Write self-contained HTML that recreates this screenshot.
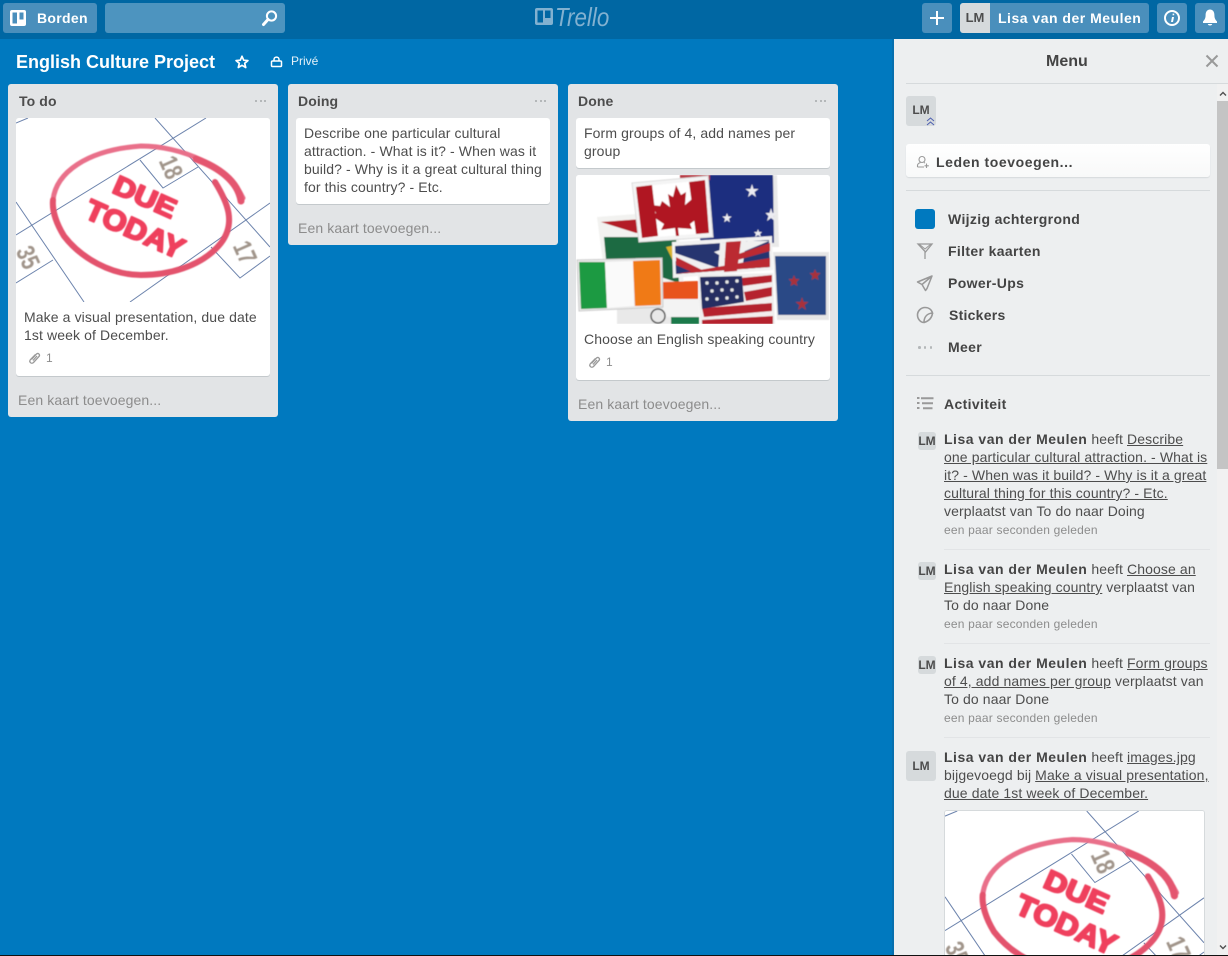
<!DOCTYPE html>
<html lang="nl"><head><meta charset="utf-8"><title>English Culture Project</title>
<style>
*{box-sizing:border-box}
html,body{margin:0;padding:0;width:1228px;height:956px;overflow:hidden;background:#0079bf;font-family:"Liberation Sans",sans-serif;font-size:14px;line-height:18px;color:#4d4d4d;letter-spacing:.11px}
.a{position:absolute;white-space:nowrap}
.hb{position:absolute;top:3px;height:30px;background:#4a8fbc;border-radius:3px;color:#fff}
.list{position:absolute;top:84px;width:270px;background:#e2e4e6;border-radius:3px}
.card{position:absolute;left:8px;width:254px;background:#fff;border-radius:3px;box-shadow:0 1px 0 #c4c9cc;overflow:hidden}
.lt{position:absolute;left:10px;top:8px;font-weight:bold;color:#4d4d4d;font-size:14px}
.dots{position:absolute;left:247px;top:16px;width:11px;height:2px;display:flex;justify-content:space-between}
.dots i{width:2px;height:2px;background:#b4b7b9;display:block}
.add{position:absolute;left:10px;color:#8c8c8c}
.ct{position:absolute;left:8px;white-space:nowrap}
.b{font-weight:bold;letter-spacing:.35px;color:#444}
.n{font-weight:bold;letter-spacing:.5px;color:#444}
.av{position:absolute;background:#d6dadc;border-radius:3px;color:#4d4d4d;font-weight:bold;text-align:center;letter-spacing:0}
.sep{position:absolute;left:906px;width:304px;height:1px;background:#d6dadc}
u{text-decoration:underline}
.tm{font-size:12px;color:#8c8c8c;letter-spacing:.2px}
</style></head>
<body>
<svg width="0" height="0" style="position:absolute">
<defs>
<filter id="soft" x="-5%" y="-5%" width="110%" height="110%"><feGaussianBlur stdDeviation=".45"/></filter>
<symbol id="due" viewBox="0 0 254 184" preserveAspectRatio="none">
<rect width="254" height="184" fill="#fff"/>
<g fill="none" stroke="#6d84ad" stroke-width="1">
<path d="M0 5L12 0M0 117L190 0M139 0L254 129M0 84L68 184M0 165L37 142M114 184L254 85M124 42L147 70L182 49M195 129L224 160L254 138"/>
</g>
<g filter="url(#soft)">
<path d="M37 82C40 55 70 32 125 28C165 28 212 48 227 80" fill="none" stroke="#e9708a" stroke-width="5" stroke-linecap="round"/>
<path d="M180 41C202 49 222 63 225 83" fill="none" stroke="#e4566f" stroke-width="7" stroke-linecap="round"/>
<path d="M199 64C212 85 220 105 205 125C185 150 150 157 125 157C95 157 65 140 48 118C40 105 36 92 37 82" fill="none" stroke="#e3526d" stroke-width="6" stroke-linecap="round"/>
<g font-family="'Liberation Sans',sans-serif" font-weight="bold" fill="#ef3f5d" stroke="#ef3f5d" stroke-width="2" stroke-linejoin="round">
<text x="0" y="0" font-size="27" textLength="66" lengthAdjust="spacingAndGlyphs" letter-spacing="0" transform="translate(95 74) rotate(24)">DUE</text>
<text x="0" y="0" font-size="29" textLength="105" lengthAdjust="spacingAndGlyphs" letter-spacing="0" transform="translate(67 99) rotate(24)">TODAY</text>
</g>
<g font-family="'Liberation Sans',sans-serif" font-weight="bold" font-size="26" fill="#a0948a">
<text textLength="22" lengthAdjust="spacingAndGlyphs" transform="translate(142.500 43) rotate(66)">18</text>
<text textLength="22" lengthAdjust="spacingAndGlyphs" transform="translate(216.500 128) rotate(66)">17</text>
<text textLength="22" lengthAdjust="spacingAndGlyphs" transform="translate(-.5 133) rotate(66)">35</text>
</g>
</g>
</symbol>
</defs>
</svg>

<!-- header -->
<div class="a" style="left:0;top:0;width:1228px;height:39px;background:#0067a3"></div>
<div class="hb" style="left:3px;width:94px"></div>
<svg class="a" style="left:10px;top:10px" width="16" height="16" viewBox="0 0 16 16"><rect width="16" height="16" rx="2" fill="#fff"/><rect x="2.500" y="2.500" width="4.500" height="11" fill="#4a8fbc"/><rect x="9.500" y="2.500" width="4" height="7" fill="#4a8fbc"/></svg>
<div class="a" style="left:37px;top:9px;color:#fff;font-weight:bold;font-size:14px;letter-spacing:.3px">Borden</div>
<div class="hb" style="left:105px;width:180px;background:#4d94bf"></div>
<svg class="a" style="left:261px;top:9px" width="18" height="18" viewBox="0 0 18 18" fill="none" stroke="#fff"><circle cx="10.500" cy="7" r="4.600" stroke-width="2"/><path d="M7 10.500L2.500 15.500" stroke-width="3" stroke-linecap="round"/></svg>
<svg class="a" style="left:535px;top:8px" width="18" height="17" viewBox="0 0 18 17"><rect width="18" height="17" rx="2" fill="#82b1d0"/><rect x="2.500" y="2.500" width="5.500" height="12" fill="#0067a3"/><rect x="10" y="2.500" width="5.500" height="7.500" fill="#0067a3"/></svg>
<div class="a" style="left:555px;top:2px;font-style:italic;font-size:26px;line-height:30px;color:#82b1d0;letter-spacing:0;transform:scaleX(.86);transform-origin:0 0">Trello</div>

<div class="hb" style="left:922px;width:30px"></div>
<svg class="a" style="left:929px;top:10px" width="16" height="16"><path d="M8 1V15M1 8H15" stroke="#fff" stroke-width="2"/></svg>
<div class="hb" style="left:960px;width:189px"></div>
<div class="av" style="left:960px;top:3px;width:30px;height:30px;line-height:30px;font-size:13px;border-radius:3px 0 0 3px">LM</div>
<div class="a" style="left:998px;top:9px;color:#fff;font-weight:bold;font-size:14px;letter-spacing:.5px">Lisa van der Meulen</div>
<div class="hb" style="left:1157px;width:30px"></div>
<svg class="a" style="left:1163px;top:9px" width="18" height="18" viewBox="0 0 18 18"><circle cx="9" cy="9" r="7" fill="none" stroke="#fff" stroke-width="2"/><path d="M9.600 4.600h1.600v1.700H9.600zM9 8h2l-1 5H8z" fill="#fff"/></svg>
<div class="hb" style="left:1195px;width:30px"></div>
<svg class="a" style="left:1202px;top:8px" width="16" height="19" viewBox="0 0 16 19"><path d="M8 1.500C5 1.500 3.600 4 3.600 7C3.600 10 2.800 11.500 1 13.500V15H15V13.500C13.200 11.500 12.400 10 12.400 7C12.400 4 11 1.500 8 1.500Z" fill="#fff"/><path d="M5.800 16H10.200C10 18 6 18 5.800 16Z" fill="#fff"/></svg>

<!-- board title -->
<div class="a" style="left:16px;top:51px;font-size:18px;line-height:22px;font-weight:bold;color:#fff;letter-spacing:0">English Culture Project</div>
<svg class="a" style="left:235px;top:55px" width="14" height="14" viewBox="0 0 14 14"><path d="M7 1.300L8.700 5.200L12.900 5.600L9.700 8.300L10.700 12.500L7 10.300L3.300 12.500L4.300 8.300L1.100 5.600L5.300 5.200Z" fill="none" stroke="#fff" stroke-width="1.700" stroke-linejoin="round"/></svg>
<svg class="a" style="left:270px;top:55px" width="13" height="13" viewBox="0 0 13 13" fill="none" stroke="#fff" stroke-width="1.500"><rect x="1.500" y="6" width="10" height="5.500" rx="1"/><path d="M4 6V4.500C4 1.300 9 1.300 9 4.500V6"/></svg>
<div class="a" style="left:291px;top:52px;color:#fff;font-size:12px;opacity:.9;letter-spacing:0">Privé</div>

<!-- To do -->
<div class="list" style="left:8px;height:333px">
<div class="lt" style="left:11px">To do</div>
<div class="dots"><i></i><i></i><i></i></div>
<div class="card" style="top:34px;height:258px">
<svg width="254" height="184" style="display:block"><use href="#due" width="254" height="184"/></svg>
<div class="ct" style="top:190px">Make a visual presentation, due date<br>1st week of December.</div>
<svg class="a" style="left:12px;top:233px" width="14" height="14" viewBox="0 0 14 14" fill="none" stroke="#999" stroke-width="1.300"><path d="M3.500 8.500L8.500 3C10 1.500 12.500 3.500 11 5.500L5.500 11.500C3.500 13.500 .5 11 2.500 8.500L7.500 3.500M5 9.500L9 5"/></svg>
<div class="a" style="left:30px;top:231px;font-size:12px;color:#8c8c8c">1</div>
</div>
<div class="add" style="top:307px">Een kaart toevoegen...</div>
</div>

<!-- Doing -->
<div class="list" style="left:288px;height:161px">
<div class="lt">Doing</div>
<div class="dots"><i></i><i></i><i></i></div>
<div class="card" style="top:34px;height:86px">
<div class="ct" style="top:6px">Describe one particular cultural<br>attraction. - What is it? - When was it<br>build? - Why is it a great cultural thing<br>for this country? - Etc.</div>
</div>
<div class="add" style="top:135px">Een kaart toevoegen...</div>
</div>

<!-- Done -->
<div class="list" style="left:568px;height:337px">
<div class="lt">Done</div>
<div class="dots"><i></i><i></i><i></i></div>
<div class="card" style="top:34px;height:50px">
<div class="ct" style="top:6px">Form groups of 4, add names per<br>group</div>
</div>
<div class="card" style="top:91px;height:205px">
<svg width="254" height="149" viewBox="0 0 254 149" style="display:block">
<rect width="254" height="149" fill="#fff"/>
<g filter="url(#soft)">
<!-- south africa -->
<polygon points="21,42 100,36 108,110 30,110" fill="#f2f2f0"/>
<polygon points="25,47 96,42 98,55 60,58" fill="#b31f25"/>
<polygon points="28,62 100,62 103,108 30,84" fill="#1d6b42"/>
<polygon points="90,72 100,70 100,92" fill="#d8b32a"/>
<!-- australia -->
<polygon points="104,0 201,0 203,72 130,72" fill="#e9e9e9"/>
<polygon points="110,0 197,0 198,68 125,68" fill="#1c2f7f"/>
<path d="M176 9l1.500 5 5 0-4 3 1.500 5-4-3-4 3 1.500-5-4-3 5 0zM151 38l1.200 3.500 3.500 0-2.800 2.200 1 3.500-2.900-2-2.900 2 1-3.500-2.800-2.200 3.500 0zM195 33l1.500 5 4 0-3 3 1.500 5-4-3-4 3 1.500-5-3-3 4 0zM182 54l1 3 3 0-2 2 1 3-3-2-3 2 1-3-2-2 3 0z" fill="#ececf2"/>
<rect x="104" y="0" width="30" height="5" fill="#b73a45"/>
<!-- canada -->
<polygon points="56,8 132,1 137,62 63,67" fill="#f4f4f4" stroke="#ddd"/>
<polygon points="60,12 129,5 133,58 66,63" fill="#fff"/>
<polygon points="60,12 76,10 82,61 66,63" fill="#b01722"/>
<polygon points="113,7 129,5 133,58 120,59" fill="#b01722"/>
<path d="M100 10l5 10 5-3-1 13 7-6 3 5 7-1-3 9 4 2-13 10 2 5-14-1 1 8-3 0-1-8-14 2 3-6-12-8 4-3-4-8 8 1 2-5 8 6-2-13 5 3z" fill="#b01722"/>
<!-- nz -->
<polygon points="197,77 253,77 253,145 201,145" fill="#e6e6e6"/>
<polygon points="199,81 250,81 250,140 202,140" fill="#2b4a86"/>
<path d="M239 94l1.500 4 4 0-3 3 1 4-3.500-2-3.500 2 1-4-3-3 4 0zM218 100l1.500 4 4 0-3 3 1 4-3.500-2-3.500 2 1-4-3-3 4 0zM226 122l1.500 5 5 0-4 3 1.500 5-4-3-4 3 1.500-5-4-3 5 0z" fill="#a8323a"/>
<!-- india -->
<rect x="41" y="130" width="82" height="19" fill="#e9e9e9"/>
<polygon points="87,107 122,106 122,130 87,130" fill="#e8531c"/>
<rect x="87" y="124" width="36" height="18" fill="#f3f3f3"/>
<rect x="95" y="142" width="28" height="7" fill="#1c7a4c"/>
<circle cx="82" cy="141" r="7" fill="#e8e8e8" stroke="#555" stroke-width="1.500"/>
<!-- uk -->
<polygon points="96,67 196,61 197,95 97,103" fill="#f2f2f2"/>
<polygon points="99,71 193,65 194,92 100,99" fill="#28356f"/>
<path d="M99 78L150 96H128L99 86ZM193 66L150 84L138 77L172 66ZM144 68L170 66L166 96L142 97Z" fill="#f0f0f0"/>
<path d="M150 67L165 66L161 96L148 97ZM100 82L130 97H116L100 90ZM194 68V76L158 86L148 84ZM100 99L194 83V92Z" fill="#bb2a33"/>
<!-- ireland -->
<polygon points="1,85 86,83 87,132 3,136" fill="#e9e9e9" stroke="#ccc"/>
<polygon points="3,87 29,87 31,133 5,134" fill="#1f9a42"/>
<polygon points="29,87 57,86 58,131 31,133" fill="#fafafa"/>
<polygon points="57,86 84,85 85,130 59,131" fill="#f07a18"/>
<!-- usa -->
<polygon points="122,100 197,98 199,149 124,149" fill="#eee"/>
<polygon points="124,102 196,100 197,149 126,149" fill="#f3eeee"/>
<path d="M165 103L196 100V107L167 111ZM168 117L196 112V121L170 126ZM126 133L196 128V136L128 142ZM126 145L197 141V149H126Z" fill="#b5202e"/>
<polygon points="124,102 166,101 168,127 126,134" fill="#262f62"/>
<g fill="#e6e6e6"><circle cx="131" cy="108" r="1.700"/><circle cx="141" cy="108" r="1.700"/><circle cx="151" cy="107" r="1.700"/><circle cx="161" cy="106" r="1.700"/><circle cx="136" cy="116" r="1.700"/><circle cx="146" cy="115" r="1.700"/><circle cx="156" cy="115" r="1.700"/><circle cx="131" cy="124" r="1.700"/><circle cx="141" cy="124" r="1.700"/><circle cx="151" cy="123" r="1.700"/><circle cx="161" cy="122" r="1.700"/></g>
</g>
</svg>
<div class="ct" style="top:155px">Choose an English speaking country</div>
<svg class="a" style="left:12px;top:180px" width="14" height="14" viewBox="0 0 14 14" fill="none" stroke="#999" stroke-width="1.300"><path d="M3.500 8.500L8.500 3C10 1.500 12.500 3.500 11 5.500L5.500 11.500C3.500 13.500 .5 11 2.500 8.500L7.500 3.500M5 9.500L9 5"/></svg>
<div class="a" style="left:30px;top:178px;font-size:12px;color:#8c8c8c">1</div>
</div>
<div class="add" style="top:311px">Een kaart toevoegen...</div>
</div>

<!-- Menu panel -->
<div class="a" style="left:892px;top:39px;width:2px;height:917px;background:#066fae"></div>
<div class="a" style="left:894px;top:39px;width:334px;height:917px;background:#edeff0"></div>
<div class="a" style="left:1046px;top:52px;font-size:16px;line-height:20px;font-weight:bold;color:#444;letter-spacing:0">Menu</div>
<svg class="a" style="left:1205px;top:54px" width="14" height="14"><path d="M1.500 1.500L12.500 12.500M12.500 1.500L1.500 12.500" stroke="#999" stroke-width="2"/></svg>
<div class="a" style="left:906px;top:83px;width:322px;height:1px;background:#d6dadc"></div>
<!-- scrollbar -->
<div class="a" style="left:1217px;top:84px;width:11px;height:871px;background:#f1f1f1"></div>
<div class="a" style="left:1217px;top:101px;width:11px;height:368px;background:#c4c4c4"></div>
<svg class="a" style="left:1219px;top:91px" width="8" height="6"><path d="M1 4.500L4 1.500L7 4.500" fill="none" stroke="#505050" stroke-width="1.400"/></svg>
<svg class="a" style="left:1219px;top:944px" width="8" height="6"><path d="M1 1.500L4 4.500L7 1.500" fill="none" stroke="#505050" stroke-width="1.400"/></svg>

<div class="av" style="left:906px;top:96px;width:30px;height:30px;line-height:28px;font-size:12px">LM</div>
<svg class="a" style="left:926px;top:117px" width="9" height="9" viewBox="0 0 9 9" fill="none" stroke="#4d5fb0" stroke-width="1"><path d="M1 4L4.500 1L8 4M1 8L4.500 5L8 8"/></svg>

<div class="a" style="left:906px;top:144px;width:304px;height:33px;background:linear-gradient(#fff,#f8f9f9);border-radius:3px;box-shadow:0 1px 1px #d6dadc"></div>
<svg class="a" style="left:916px;top:155px" width="14" height="14" viewBox="0 0 14 14" fill="none" stroke="#999" stroke-width="1.100"><circle cx="6" cy="4.500" r="3"/><path d="M1.500 12V10.500C1.500 9 3 8 4.500 7.500M8 7.500L9 8M1.500 12H8"/><path d="M10.500 8.500V13M8.500 10.800H12.800"/></svg>
<div class="a b" style="left:936px;top:153px;letter-spacing:.57px">Leden toevoegen...</div>
<div class="sep" style="top:190px"></div>

<div class="a" style="left:915px;top:209px;width:20px;height:20px;background:#0079bf;border-radius:3px"></div>
<div class="a b" style="left:948px;top:210px">Wijzig achtergrond</div>
<svg class="a" style="left:916px;top:242px" width="18" height="18" viewBox="0 0 18 18" fill="none" stroke="#999" stroke-width="1.300"><path d="M2 2H16L9.500 10L2 2ZM9 10V17" /><path d="M3 2L9 7L15 2" stroke-width="1"/></svg>
<div class="a b" style="left:948px;top:242px">Filter kaarten</div>
<svg class="a" style="left:916px;top:274px" width="18" height="18" viewBox="0 0 18 18" fill="none" stroke="#999" stroke-width="1.500" stroke-linejoin="round"><path d="M16 2L1.500 8L6 10.500L9.500 16.500L11 14.500ZM16 2L6 10.500"/></svg>
<div class="a b" style="left:948px;top:274px">Power-Ups</div>
<svg class="a" style="left:916px;top:306px" width="18" height="18" viewBox="0 0 18 18" fill="none" stroke="#999" stroke-width="1.600"><path d="M16.500 7C15.500 3.500 12.500 1.500 9 1.500C5 1.500 1.500 5 1.500 9C1.500 13 4.500 16.500 8 16.500C8 11 11 7.500 16.500 7ZM16.500 7C16 11.500 13 15 8 16.500"/></svg>
<div class="a b" style="left:949px;top:306px;letter-spacing:.25px">Stickers</div>
<div class="a" style="left:918px;top:346px;width:14px;height:3px;display:flex;justify-content:space-between"><i style="width:2.500px;height:2.500px;background:#b4b7b9;display:block;border-radius:50%"></i><i style="width:2.500px;height:2.500px;background:#b4b7b9;display:block;border-radius:50%"></i><i style="width:2.500px;height:2.500px;background:#b4b7b9;display:block;border-radius:50%"></i></div>
<div class="a b" style="left:948px;top:338px">Meer</div>
<div class="sep" style="top:375px"></div>

<svg class="a" style="left:917px;top:396px" width="17" height="15" viewBox="0 0 17 15"><path d="M0 1h2.500v2H0zM0 6h2.500v2H0zM0 11h2.500v2H0z" fill="#999"/><path d="M4 1.200h12.500v2H4zM5 6.200h11v2H5zM6 11.200h9.500v2H6z" fill="#999"/></svg>
<div class="a b" style="left:944px;top:395px">Activiteit</div>

<!-- activity 1 -->
<div class="av" style="left:918px;top:432px;width:18px;height:18px;line-height:18px;font-size:12px">LM</div>
<div class="a" style="left:944px;top:430px"><span class="n">Lisa van der Meulen</span> heeft <u>Describe</u><br><u>one particular cultural attraction. - What is</u><br><u>it? - When was it build? - Why is it a great</u><br><u>cultural thing for this country? - Etc.</u><br>verplaatst van To do naar Doing</div>
<div class="a tm" style="left:944px;top:521px">een paar seconden geleden</div>
<div class="a" style="left:944px;top:549px;width:266px;height:1px;background:#e2e4e6"></div>

<!-- activity 2 -->
<div class="av" style="left:918px;top:562px;width:18px;height:18px;line-height:18px;font-size:12px">LM</div>
<div class="a" style="left:944px;top:560px"><span class="n">Lisa van der Meulen</span> heeft <u>Choose an</u><br><u>English speaking country</u> verplaatst van<br>To do naar Done</div>
<div class="a tm" style="left:944px;top:615px">een paar seconden geleden</div>
<div class="a" style="left:944px;top:643px;width:266px;height:1px;background:#e2e4e6"></div>

<!-- activity 3 -->
<div class="av" style="left:918px;top:656px;width:18px;height:18px;line-height:18px;font-size:12px">LM</div>
<div class="a" style="left:944px;top:654px"><span class="n">Lisa van der Meulen</span> heeft <u>Form groups</u><br><u>of 4, add names per group</u> verplaatst van<br>To do naar Done</div>
<div class="a tm" style="left:944px;top:709px">een paar seconden geleden</div>
<div class="a" style="left:944px;top:737px;width:266px;height:1px;background:#e2e4e6"></div>

<!-- activity 4 -->
<div class="av" style="left:906px;top:751px;width:30px;height:30px;line-height:30px;font-size:12px">LM</div>
<div class="a" style="left:944px;top:748px"><span class="n">Lisa van der Meulen</span> heeft <u>images.jpg</u><br>bijgevoegd bij <u>Make a visual presentation,</u><br><u>due date 1st week of December.</u></div>
<div class="a" style="left:944px;top:810px;width:261px;height:146px;overflow:hidden;border:1px solid #d6dadc;border-bottom:0;border-radius:3px 3px 0 0;background:#fff"><svg width="259" height="188" style="display:block"><use href="#due" width="259" height="188"/></svg></div>

<div class="a" style="left:0;top:955px;width:1228px;height:1px;background:#111"></div>
</body></html>
